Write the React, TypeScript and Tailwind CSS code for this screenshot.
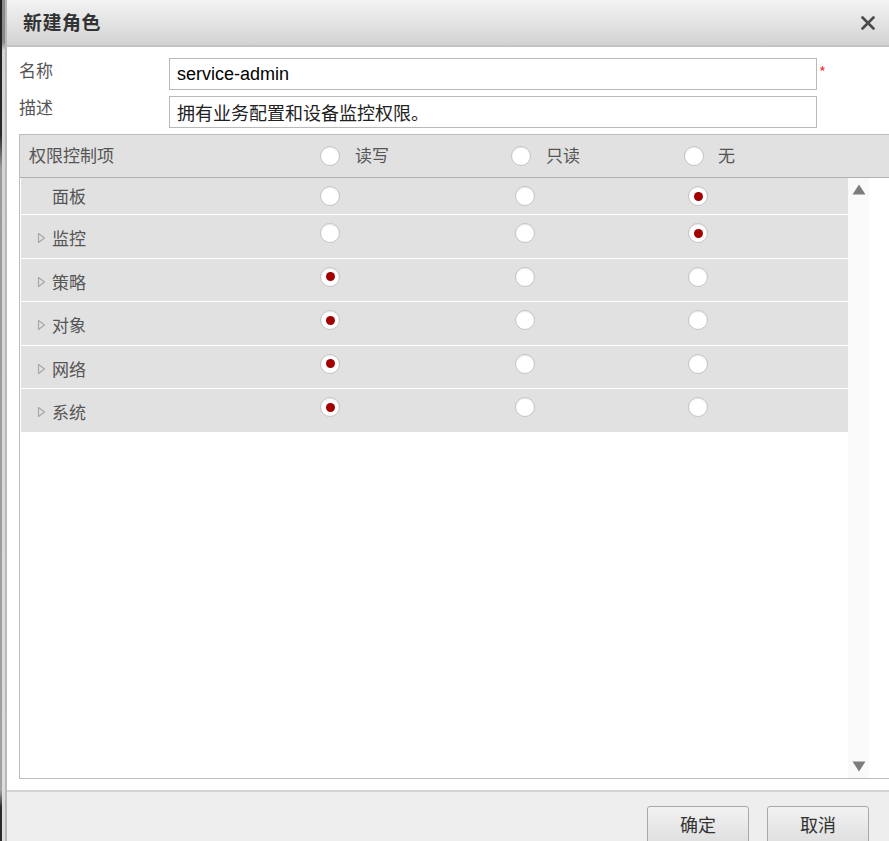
import React from "react";

type Level = "rw" | "ro" | "none";

const rows: {name: string; level: Level; expandable: boolean}[] = [
  {name: "面板", level: "none", expandable: false},
  {name: "监控", level: "none", expandable: true},
  {name: "策略", level: "rw", expandable: true},
  {name: "对象", level: "rw", expandable: true},
  {name: "网络", level: "rw", expandable: true},
  {name: "系统", level: "rw", expandable: true},
];

const cjk = {fontFamily: '"Noto Sans CJK SC", "Liberation Sans", sans-serif'};

const Radio = ({checked}: {checked?: boolean}) => (
  <span className="flex h-[20px] w-[20px] shrink-0 items-center justify-center rounded-full border border-[#c4c4c4] bg-white shadow-[inset_0_1px_1px_rgba(0,0,0,0.08)]">
    {checked && <span className="h-[9px] w-[9px] rounded-full bg-[#a30000]" />}
  </span>
);

const Arrow = () => (
  <svg width="9" height="12" viewBox="0 0 9 12" className="shrink-0">
    <path d="M1.5 1.5 L7.5 6 L1.5 10.5 Z" fill="none" stroke="#a8a8a8" strokeWidth="1.2" strokeLinejoin="round" />
  </svg>
);

const PermRow = ({name, level, expandable, first}: {name: string; level: Level; expandable: boolean; first?: boolean}) => (
  <div
    className={
      first
        ? "flex h-[36px] items-center bg-[#e1e1e1]"
        : "flex h-[43.6px] items-start border-t border-white bg-[#e1e1e1]"
    }
  >
    <div className={first ? "flex w-[299px] items-center pl-[31px]" : "mt-[11px] flex w-[299px] items-center gap-[6px] pl-[16px]"}>
      {expandable && <Arrow />}
      <span className="text-[17px] leading-[24px] text-[#555]">{name}</span>
    </div>
    <div className={first ? "flex w-[195px]" : "mt-[8px] flex w-[195px]"}>
      <Radio checked={level === "rw"} />
    </div>
    <div className={first ? "flex w-[173px]" : "mt-[8px] flex w-[173px]"}>
      <Radio checked={level === "ro"} />
    </div>
    <div className={first ? "flex" : "mt-[8px] flex"}>
      <Radio checked={level === "none"} />
    </div>
  </div>
);

export default function App() {
  return (
    <div className="flex h-[841px] w-[889px] overflow-hidden bg-white" style={cjk}>
      <div className="flex w-[7px] shrink-0">
        <div className="w-[2px] bg-[linear-gradient(#1e1e1e_0%,#2a2a2a_16%,#9a9a9a_20%,#a0a0a0_94%,#2a2a2a_96%)]" />
        <div className="w-[3px] bg-[linear-gradient(#8a8a8a_0%,#8a8a8a_5%,#d4d4d4_6%,#dedede_100%)]" />
        <div className="w-[2px] bg-[#b9b9b9]" />
      </div>

      <div className="flex min-w-0 flex-1 flex-col">
        {/* title bar */}
        <div className="flex h-[47px] shrink-0 items-center justify-between border-b-2 border-[#c4c4c4] bg-[linear-gradient(#f3f3f3,#d3d3d3)] pl-[16px] pr-[14px]">
          <span className="text-[19px] font-bold tracking-[0.5px] text-[#333]">新建角色</span>
          <svg width="14" height="14" viewBox="0 0 14 14">
            <path d="M1.5 1.5 L12.5 12.5 M12.5 1.5 L1.5 12.5" stroke="#4a4a4a" strokeWidth="2.6" strokeLinecap="round" />
          </svg>
        </div>

        {/* body */}
        <div className="flex min-h-0 flex-1 flex-col overflow-hidden pl-[11px] pt-[11px]">
          <div className="flex h-[32px] items-start">
            <span className="mt-[1px] w-[151px] pl-[1px] text-[17px] leading-[22px] text-[#555]">名称</span>
            <div className="flex h-[32px] w-[648px] items-center border border-[#b9b9b9] px-[7px]">
              <span className="text-[18px] text-black" style={{fontFamily: '"Liberation Sans", Arial, sans-serif'}}>
                service-admin
              </span>
            </div>
            <span className="ml-[2px] mt-[6px] text-[15px] leading-none text-[#ff3030]">*</span>
          </div>
          <div className="mt-[6px] flex h-[32px] items-start">
            <span className="w-[151px] pl-[1px] text-[17px] leading-[22px] text-[#555]">描述</span>
            <div className="flex h-[32px] w-[648px] items-center border border-[#b9b9b9] px-[7px]">
              <span className="text-[18px] text-[#222]">拥有业务配置和设备监控权限。</span>
            </div>
          </div>

          {/* permission table */}
          <div className="ml-px mt-[6px] flex h-[645px] w-[900px] flex-col border border-[#bdbdbd]">
            <div className="flex h-[43px] shrink-0 items-center border-b border-[#b0b0b0] bg-[#e1e1e1]">
              <span className="w-[300px] pb-[2px] pl-[9px] text-[17px] text-[#555]">权限控制项</span>
              <div className="flex w-[191px] items-center gap-[15px]">
                <Radio />
                <span className="pb-[2px] text-[17px] text-[#555]">读写</span>
              </div>
              <div className="flex w-[173px] items-center gap-[15px]">
                <Radio />
                <span className="pb-[2px] text-[17px] text-[#555]">只读</span>
              </div>
              <div className="flex items-center gap-[14px]">
                <Radio />
                <span className="pb-[2px] text-[17px] text-[#555]">无</span>
              </div>
            </div>
            <div className="flex min-h-0 flex-1">
              <div className="w-[828px] pl-px">
                {rows.map((r, i) => (
                  <PermRow key={r.name} {...r} first={i === 0} />
                ))}
              </div>
              <div className="flex w-[21px] flex-col items-center justify-between bg-[#f9f9f9] pb-[6px] pt-[6px]">
                <svg width="14" height="11" viewBox="0 0 14 11">
                  <path d="M7 0.5 L13.5 10.5 L0.5 10.5 Z" fill="#7c7c7c" />
                </svg>
                <svg width="14" height="11" viewBox="0 0 14 11">
                  <path d="M0.5 0.5 L13.5 0.5 L7 10.5 Z" fill="#7c7c7c" />
                </svg>
              </div>
            </div>
          </div>
        </div>

        {/* footer */}
        <div className="flex h-[51px] shrink-0 items-start justify-end gap-[18px] border-t-2 border-[#d2d2d2] bg-[#eeeeee] pr-[20px] pt-[14px]">
          <button className="h-[40px] w-[102px] rounded-[3px] border border-[#a8a8a8] bg-[linear-gradient(#f2f2f2,#dedede)] pb-[4px] text-[18px] text-[#333]">
            确定
          </button>
          <button className="h-[40px] w-[102px] rounded-[3px] border border-[#a8a8a8] bg-[linear-gradient(#f2f2f2,#dedede)] pb-[4px] text-[18px] text-[#333]">
            取消
          </button>
        </div>
      </div>
    </div>
  );
}
